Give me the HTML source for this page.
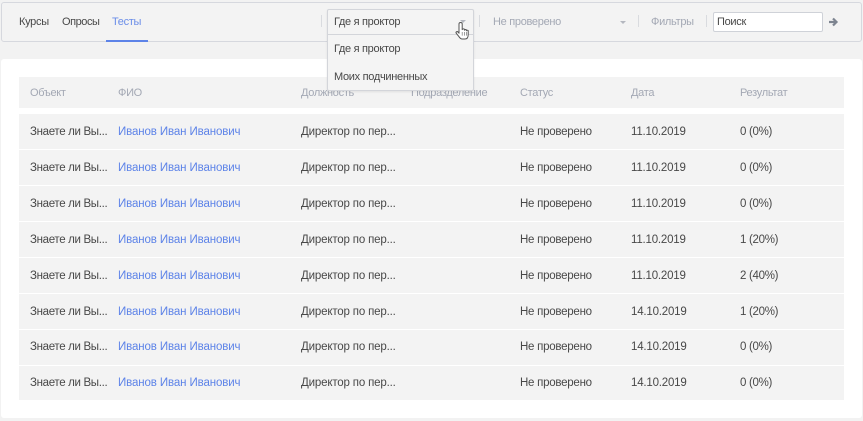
<!DOCTYPE html>
<html><head><meta charset="utf-8">
<style>
html,body{margin:0;padding:0;width:863px;height:421px;overflow:hidden;background:#f2f2f2;}
body{position:relative;font-family:"Liberation Sans",sans-serif;font-size:11.5px;color:#484848;}
#w{position:absolute;left:0;top:0;width:863px;height:421px;filter:blur(.3px);}
.a{position:absolute;white-space:nowrap;line-height:14px;}
.bar{position:absolute;left:1px;top:2px;width:859px;height:38px;border:1px solid #d6d8de;border-radius:3px;background:#f3f3f3;}
.card{position:absolute;left:1px;top:59px;width:861px;height:359px;background:#fff;border-radius:3px;}
.hd{position:absolute;left:19px;top:77px;width:825px;height:31px;background:#f3f3f3;}
.row{position:absolute;left:19px;width:825px;background:#f3f3f3;}
.h{color:#a3a8b4;font-size:11px;letter-spacing:-.3px;}
.m{font-size:11px;letter-spacing:-.3px;}
.o{letter-spacing:-.33px;}
.l{color:#5d83e8;letter-spacing:-.12px;}
.p{letter-spacing:-.17px;}
.s{letter-spacing:-.25px;}
.d{letter-spacing:-.2px;}
.r{letter-spacing:-.3px;}
.sep{position:absolute;top:15px;width:1px;height:12px;background:#d9dbdf;}
.dd{position:absolute;left:327px;top:9px;width:145px;height:80px;border:1px solid #d3d5da;border-radius:2px;background:#f4f4f4;box-shadow:0 1px 2px rgba(0,0,0,.08);}
.dd i{position:absolute;left:0;top:24px;width:145px;height:1px;background:#d3d5da;}
.inp{position:absolute;left:713px;top:12px;width:108px;height:18px;background:#fff;border:1px solid #cfd2d8;border-radius:2px;}
</style></head><body><div id="w">
<div class="bar"></div>
<div class="a m" style="left:19px;top:15px">Курсы</div>
<div class="a m" style="left:62px;top:15px;letter-spacing:-.45px">Опросы</div>
<div class="a m" style="left:112px;top:15px;color:#6a8de8">Тесты</div>
<div style="position:absolute;left:106px;top:40px;width:42px;height:1.5px;background:#5d83e8"></div>
<div class="sep" style="left:321px"></div>
<div class="sep" style="left:479px"></div>
<div class="sep" style="left:638px"></div>
<div class="sep" style="left:706px"></div>
<div class="a h" style="left:493px;top:15px">Не проверено</div>
<div style="position:absolute;left:620px;top:21px;width:0;height:0;border-left:3.5px solid transparent;border-right:3.5px solid transparent;border-top:3.5px solid #b4b7bf"></div>
<div class="a h" style="left:651px;top:15px">Фильтры</div>
<div class="inp"></div>
<div class="a m" style="left:717px;top:15px">Поиск</div>
<svg style="position:absolute;left:827px;top:16px" width="12" height="12" viewBox="0 0 12 12"><path d="M2 6H9.5M6 2.5L9.5 6L6 9.5" fill="none" stroke="#7d8490" stroke-width="2.2"/></svg>
<div class="card"></div>
<div class="hd"></div>
<div class="a h" style="left:30px;top:86px">Объект</div>
<div class="a h" style="left:118px;top:86px">ФИО</div>
<div class="a h" style="left:301px;top:86px">Должность</div>
<div class="a h" style="left:411px;top:86px">Подразделение</div>
<div class="a h" style="left:520px;top:86px">Статус</div>
<div class="a h" style="left:631px;top:86px">Дата</div>
<div class="a h" style="left:740px;top:86px">Результат</div>

<div class="row" style="top:114px;height:35px"></div>
<div class="row" style="top:150px;height:35px"></div>
<div class="row" style="top:186px;height:35px"></div>
<div class="row" style="top:222px;height:35px"></div>
<div class="row" style="top:258px;height:35px"></div>
<div class="row" style="top:294px;height:35px"></div>
<div class="row" style="top:330px;height:35px"></div>
<div class="row" style="top:366px;height:34px"></div>

<div class="a o" style="left:30px;top:125px">Знаете ли Вы...</div><div class="a l" style="left:118px;top:125px">Иванов Иван Иванович</div><div class="a p" style="left:301px;top:125px">Директор по пер...</div><div class="a s" style="left:520px;top:125px">Не проверено</div><div class="a d" style="left:631px;top:125px">11.10.2019</div><div class="a r" style="left:740px;top:125px">0 (0%)</div>
<div class="a o" style="left:30px;top:161px">Знаете ли Вы...</div><div class="a l" style="left:118px;top:161px">Иванов Иван Иванович</div><div class="a p" style="left:301px;top:161px">Директор по пер...</div><div class="a s" style="left:520px;top:161px">Не проверено</div><div class="a d" style="left:631px;top:161px">11.10.2019</div><div class="a r" style="left:740px;top:161px">0 (0%)</div>
<div class="a o" style="left:30px;top:197px">Знаете ли Вы...</div><div class="a l" style="left:118px;top:197px">Иванов Иван Иванович</div><div class="a p" style="left:301px;top:197px">Директор по пер...</div><div class="a s" style="left:520px;top:197px">Не проверено</div><div class="a d" style="left:631px;top:197px">11.10.2019</div><div class="a r" style="left:740px;top:197px">0 (0%)</div>
<div class="a o" style="left:30px;top:233px">Знаете ли Вы...</div><div class="a l" style="left:118px;top:233px">Иванов Иван Иванович</div><div class="a p" style="left:301px;top:233px">Директор по пер...</div><div class="a s" style="left:520px;top:233px">Не проверено</div><div class="a d" style="left:631px;top:233px">11.10.2019</div><div class="a r" style="left:740px;top:233px">1 (20%)</div>
<div class="a o" style="left:30px;top:269px">Знаете ли Вы...</div><div class="a l" style="left:118px;top:269px">Иванов Иван Иванович</div><div class="a p" style="left:301px;top:269px">Директор по пер...</div><div class="a s" style="left:520px;top:269px">Не проверено</div><div class="a d" style="left:631px;top:269px">11.10.2019</div><div class="a r" style="left:740px;top:269px">2 (40%)</div>
<div class="a o" style="left:30px;top:305px">Знаете ли Вы...</div><div class="a l" style="left:118px;top:305px">Иванов Иван Иванович</div><div class="a p" style="left:301px;top:305px">Директор по пер...</div><div class="a s" style="left:520px;top:305px">Не проверено</div><div class="a d" style="left:631px;top:305px">14.10.2019</div><div class="a r" style="left:740px;top:305px">1 (20%)</div>
<div class="a o" style="left:30px;top:340px">Знаете ли Вы...</div><div class="a l" style="left:118px;top:340px">Иванов Иван Иванович</div><div class="a p" style="left:301px;top:340px">Директор по пер...</div><div class="a s" style="left:520px;top:340px">Не проверено</div><div class="a d" style="left:631px;top:340px">14.10.2019</div><div class="a r" style="left:740px;top:340px">0 (0%)</div>
<div class="a o" style="left:30px;top:376px">Знаете ли Вы...</div><div class="a l" style="left:118px;top:376px">Иванов Иван Иванович</div><div class="a p" style="left:301px;top:376px">Директор по пер...</div><div class="a s" style="left:520px;top:376px">Не проверено</div><div class="a d" style="left:631px;top:376px">14.10.2019</div><div class="a r" style="left:740px;top:376px">0 (0%)</div>

<div class="dd"><i></i></div>
<div class="a m" style="left:334px;top:15px">Где я проктор</div>
<div class="a m" style="left:334px;top:42px">Где я проктор</div>
<div class="a m" style="left:334px;top:70px">Моих подчиненных</div>
<div style="position:absolute;left:460px;top:20px;width:0;height:0;border-left:3.5px solid transparent;border-right:3.5px solid transparent;border-top:3.5px solid #b4b7bf"></div>
<svg style="position:absolute;left:455px;top:20px" width="16" height="21" viewBox="0 0 16 21"><path d="M4 4C4 2 7.2 2 7.2 4V9.6C7.2 8.6 9.6 8.6 9.6 9.6V10.2C9.6 9.3 11.4 9.3 11.4 10.2V10.8C11.4 10 13.2 10 13.2 10.8V14.5C13.2 17 12.4 19 10 19H7.2C5.4 19 4.8 18 3.9 16.6L1.2 13.2C.5 12 2 11 3 12L4 13.2Z" fill="#fff" stroke="#555" stroke-width="1" stroke-linejoin="round"/><path d="M7.2 12V15.6M9.4 12V15.6M11.4 12V15.6" stroke="#777" stroke-width=".7"/></svg>
</div></body></html>
